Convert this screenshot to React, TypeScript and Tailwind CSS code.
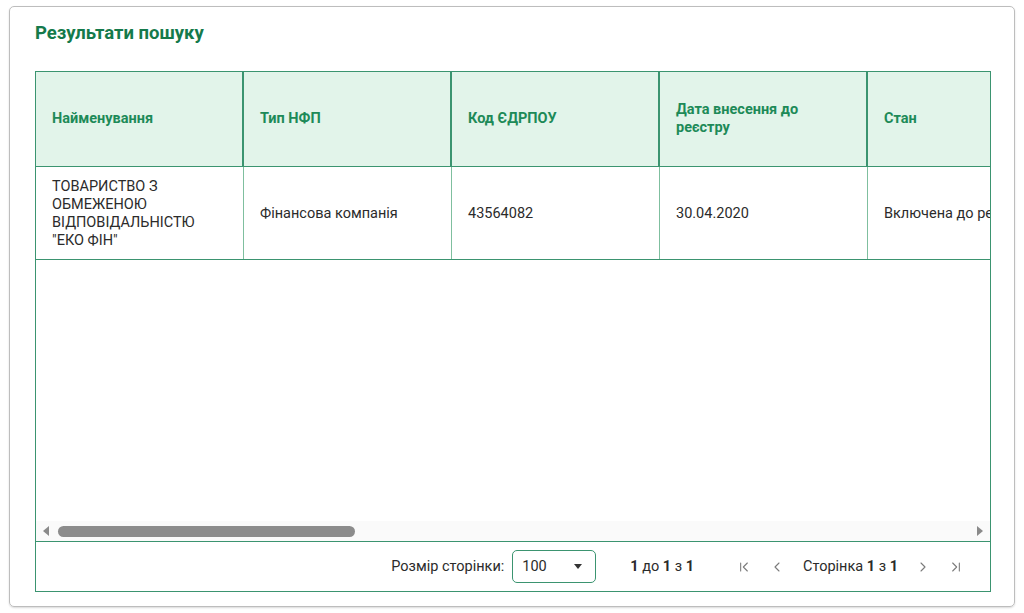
import { ChevronLeft, ChevronRight, ChevronFirst, ChevronLast } from 'lucide-react'

const cols = [
  { title: 'Найменування', value: 'ТОВАРИСТВО З ОБМЕЖЕНОЮ ВІДПОВІДАЛЬНІСТЮ "ЕКО ФІН"' },
  { title: 'Тип НФП', value: 'Фінансова компанія' },
  { title: 'Код ЄДРПОУ', value: '43564082' },
  { title: 'Дата внесення до реєстру', value: '30.04.2020' },
  { title: 'Стан', value: 'Включена до реєстру' },
]

export default function App() {
  return (
    <div className="bg-white w-[1024px] h-[613px] p-[6px_9px] font-['Roboto',sans-serif]">
      <div className="h-[601px] border border-[#bdbdbd] rounded-[5px] shadow-[0_1px_2px_rgba(0,0,0,0.15)] pt-[15px] pl-[25px] pr-[25px]">
        <h2 className="text-[18.5px] font-bold text-[#157a4b] leading-[22px]">Результати пошуку</h2>

        <div className="mt-[27px] w-[956px] h-[521px] border border-[#3b9470] flex flex-col">
          {/* scroll viewport */}
          <div className="flex-1 flex flex-col overflow-hidden">
            <div className="flex h-[95px] bg-[#e2f4ea] border-b border-[#3b9470] shrink-0">
              {cols.map((c, i) => (
                <div
                  key={i}
                  className={`w-[208px] shrink-0 flex items-center px-[16px] text-[14.5px] font-bold text-[#1d8a58] leading-[18px] ${i < cols.length - 1 ? 'border-r-2 border-[#3b9470]' : ''}`}
                >
                  <span className="pr-2">{c.title}</span>
                </div>
              ))}
            </div>
            <div className="flex h-[93px] border-b border-[#3b9470] shrink-0">
              {cols.map((c, i) => (
                <div
                  key={i}
                  className={`w-[208px] shrink-0 flex items-center px-[16px] pt-[2px] text-[14.5px] text-[#2b2b2b] leading-[18px] whitespace-nowrap ${i < cols.length - 1 ? 'border-r border-[#7fbf9f]' : ''}`}
                >
                  {i === 0 ? (
                    <span className="whitespace-normal w-[160px]">{c.value}</span>
                  ) : (
                    <span>{c.value}</span>
                  )}
                </div>
              ))}
            </div>
            <div className="flex-1" />
            {/* horizontal scrollbar */}
            <div className="h-[20px] bg-[#fafafa] flex items-center shrink-0">
              <div className="w-[20px] flex justify-center">
                <span className="block w-0 h-0 border-y-[5px] border-y-transparent border-r-[6px] border-r-[#8a8a8a]" />
              </div>
              <div className="flex-1 h-[12px] flex items-center">
                <div className="w-[297px] h-[11px] rounded-full bg-[#8c8c8c] ml-[2px]" />
              </div>
              <div className="w-[20px] flex justify-center">
                <span className="block w-0 h-0 border-y-[5px] border-y-transparent border-l-[6px] border-l-[#8a8a8a]" />
              </div>
            </div>
          </div>

          {/* paging panel */}
          <div className="h-[50px] border-t border-[#3b9470] flex items-center justify-end pr-[26px] text-[14.5px] text-[#2b2b2b] shrink-0">
            <span>Розмір сторінки:</span>
            <div className="ml-[8px] w-[84px] h-[33px] border border-[#3b9470] rounded-[5px] flex items-center justify-between px-[9px]">
              <span>100</span>
              <span className="block w-0 h-0 border-x-[4px] border-x-transparent border-t-[5px] border-t-[#333] mr-[4px]" />
            </div>
            <span className="ml-[34px]">
              <b>1</b> до <b>1</b> з <b>1</b>
            </span>
            <div className="ml-[42px] flex items-center text-[#7a7a7a]">
              <ChevronFirst size={16} strokeWidth={1.6} />
              <ChevronLeft size={16} strokeWidth={1.6} className="ml-[17px]" />
            </div>
            <span className="ml-[18px]">
              Сторінка <b>1</b> з <b>1</b>
            </span>
            <div className="ml-[17px] flex items-center text-[#7a7a7a]">
              <ChevronRight size={16} strokeWidth={1.6} />
              <ChevronLast size={16} strokeWidth={1.6} className="ml-[17px]" />
            </div>
          </div>
        </div>
      </div>
    </div>
  )
}
